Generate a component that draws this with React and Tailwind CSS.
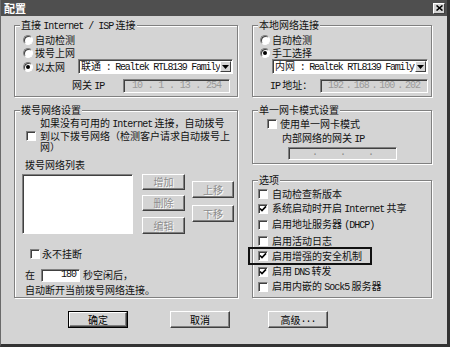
import React from "react";

const L = ({ children, className = "tracking-[-1px]" }) => (
  <span className={`font-['Liberation_Mono'] ${className}`}>{children}</span>
);

function Group({ title, className = "", children }) {
  return (
    <fieldset
      className={`border border-[#808080] shadow-[inset_1px_1px_0_#fff,1px_1px_0_#fff] ${className}`}
    >
      <legend className="ml-[5px] px-[1px] h-[12px] leading-[12px] bg-[#d4d4d4] whitespace-nowrap">
        {title}
      </legend>
      {children}
    </fieldset>
  );
}

function Radio({ checked }) {
  return (
    <span className="w-[10px] h-[10px] shrink-0 rounded-full bg-white border border-t-[#808080] border-l-[#808080] border-b-white border-r-white shadow-[inset_1px_1px_0_#404040] flex items-center justify-center">
      {checked && <span className="w-[4px] h-[4px] rounded-full bg-black" />}
    </span>
  );
}

function Check({ checked, className = "" }) {
  return (
    <span
      className={`w-[10px] h-[10px] shrink-0 bg-white border border-t-[#808080] border-l-[#808080] border-b-white border-r-white shadow-[inset_1px_1px_0_#404040] flex items-center justify-center ${className}`}
    >
      {checked && (
        <svg width="8" height="8" viewBox="0 0 8 8">
          <path d="M1 3.5 L3 5.6 L7 1.4" fill="none" stroke="#000" strokeWidth="1.6" />
        </svg>
      )}
    </span>
  );
}

function Combo({ children, className = "" }) {
  return (
    <div
      className={`flex items-center h-[15px] bg-white border border-t-[#808080] border-l-[#808080] border-b-white border-r-white shadow-[inset_1px_1px_0_#404040] ${className}`}
    >
      <span className="flex-1 min-w-0 pl-[2px] whitespace-nowrap">{children}</span>
      <span className="w-[11px] h-[11px] mr-[1px] shrink-0 bg-[#d4d4d4] border border-t-white border-l-white border-b-[#404040] border-r-[#404040] flex items-center justify-center">
        <svg width="7" height="4" viewBox="0 0 7 4">
          <path d="M0 0 H7 L3.5 4 Z" fill="#000" />
        </svg>
      </span>
    </div>
  );
}

function Field({ className = "", children }) {
  return (
    <div
      className={`flex items-center bg-[#d4d4d4] border border-t-[#808080] border-l-[#808080] border-b-white border-r-white shadow-[inset_1px_1px_0_#404040] text-[#9a9a9a] ${className}`}
    >
      {children}
    </div>
  );
}

function Btn({ children, disabled, className = "" }) {
  return (
    <div
      className={`flex items-center justify-center bg-[#d4d4d4] border border-t-white border-l-white border-b-[#404040] border-r-[#404040] shadow-[inset_-1px_-1px_0_#808080] ${
        disabled ? "text-[#8c8c8c] [text-shadow:1px_1px_0_#fff]" : "text-black"
      } ${className}`}
    >
      {children}
    </div>
  );
}

export default function App() {
  return (
    <div className="w-[450px] h-[347px] bg-[#d4d4d4] text-[10px] leading-[12px] text-[#111] font-['Noto_Sans_CJK_SC',sans-serif] border-l border-l-[#6a6a6a] border-r-[3px] border-r-[#333] border-b-[3px] border-b-[#333] flex flex-col overflow-hidden">
      {/* title bar */}
      <div className="h-[16px] shrink-0 bg-[#4f4f4f] flex items-center justify-between pl-[3px] pr-[2px]">
        <span className="text-white font-bold text-[11px] leading-[12px]">配置</span>
        <span className="w-[12px] h-[11px] bg-[#d4d4d4] border border-t-white border-l-white border-b-[#404040] border-r-[#404040] flex items-center justify-center">
          <svg width="7" height="6" viewBox="0 0 7 6">
            <path d="M0.5 0.5 L6.5 5.5 M6.5 0.5 L0.5 5.5" stroke="#000" strokeWidth="1.6" />
          </svg>
        </span>
      </div>

      <div className="flex pt-[3px] pl-[13px]">
        {/* left column */}
        <div className="flex flex-col w-[224px]">
          <Group title={<>直接 <L>Internet / ISP</L> 连接</>} className="h-[78px]">
            <div className="pl-[8px]">
              <div className="flex items-center h-[12px] mt-[3px] gap-[2px]">
                <Radio />
                <span>自动检测</span>
              </div>
              <div className="flex items-center h-[13px] gap-[2px]">
                <Radio />
                <span>拨号上网</span>
              </div>
              <div className="flex items-center h-[15px]">
                <Radio checked />
                <span className="ml-[2px] w-[43px]">以太网</span>
                <Combo className="w-[155px]">
                  联通<L className="tracking-[-1.25px]"> : Realtek RTL8139 Family</L>
                </Combo>
              </div>
              <div className="flex items-center h-[14px] mt-[5px]">
                <span className="ml-[49px] w-[51px]">
                  网关 <L>IP</L>
                </span>
                <Field className="w-[107px] h-[14px] justify-between px-[8px]">
                  <L>10</L>
                  <L>.</L>
                  <L>1</L>
                  <L>.</L>
                  <L>13</L>
                  <L>.</L>
                  <L>254</L>
                </Field>
              </div>
            </div>
          </Group>

          <Group title="拨号网络设置" className="h-[194px] mt-[7px]">
            <div className="flex items-start pl-[11px]">
              <Check className="mt-[15px]" />
              <div className="ml-[4px] leading-[11px] whitespace-nowrap pt-[1px]">
                <div>
                  如果没有可用的 <L>Internet</L> 连接，自动拨号
                </div>
                <div>到以下拨号网络（检测客户请求自动拨号上</div>
                <div>网）</div>
              </div>
            </div>
            <div className="pl-[10px] mt-[7px]">拨号网络列表</div>
            <div className="flex pl-[7px] mt-[3px]">
              <div className="w-[111px] h-[60px] bg-white border border-t-[#808080] border-l-[#808080] border-b-white border-r-white shadow-[inset_1px_1px_0_#404040]" />
              <div className="flex flex-col ml-[9px] w-[43px]">
                <Btn disabled className="h-[16px]">增加</Btn>
                <Btn disabled className="h-[16px] mt-[5px]">删除</Btn>
                <Btn disabled className="h-[17px] mt-[6px]">编辑</Btn>
              </div>
              <div className="flex flex-col ml-[7px] w-[42px]">
                <Btn disabled className="h-[17px] mt-[7px]">上移</Btn>
                <Btn disabled className="h-[17px] mt-[7px]">下移</Btn>
              </div>
            </div>
            <div className="flex items-center h-[12px] pl-[15px] mt-[14px]">
              <Check />
              <span className="ml-[2px]">永不挂断</span>
            </div>
            <div className="flex items-center h-[14px] pl-[10px] mt-[8px]">
              <span className="w-[16px]">在</span>
              <div className="w-[39px] h-[13px] bg-white border border-t-[#808080] border-l-[#808080] border-b-white border-r-white shadow-[inset_1px_1px_0_#404040] flex items-center justify-end pr-[3px]">
                <L>180</L>
              </div>
              <span className="ml-[3px]">秒空闲后，</span>
            </div>
            <div className="pl-[10px] mt-[2px]">自动断开当前拨号网络连接。</div>
          </Group>
        </div>

        {/* right column */}
        <div className="flex flex-col w-[180px] ml-[14px]">
          <Group title="本地网络连接" className="h-[78px]">
            <div className="pl-[7px]">
              <div className="flex items-center h-[12px] mt-[3px] gap-[2px]">
                <Radio />
                <span>自动检测</span>
              </div>
              <div className="flex items-center h-[13px] gap-[2px]">
                <Radio checked />
                <span>手工选择</span>
              </div>
              <div className="flex items-center h-[15px]">
                <Combo className="ml-[12px] w-[156px]">
                  内网<L className="tracking-[-1.25px]"> : Realtek RTL8139 Family</L>
                </Combo>
              </div>
              <div className="flex items-center h-[14px] mt-[5px]">
                <span className="ml-[10px] w-[50px]">
                  <L>IP</L> 地址：
                </span>
                <Field className="w-[108px] h-[14px] justify-between px-[7px]">
                  <L>192</L>
                  <L>.</L>
                  <L>168</L>
                  <L>.</L>
                  <L>100</L>
                  <L>.</L>
                  <L>202</L>
                </Field>
              </div>
            </div>
          </Group>

          <Group title="单一网卡模式设置" className="h-[60px] mt-[7px]">
            <div className="flex items-center h-[12px] pl-[14px] mt-[2px]">
              <Check />
              <span className="ml-[3px]">使用单一网卡模式</span>
            </div>
            <div className="h-[12px] pl-[29px] mt-[2px]">
              内部网络的网关 <L>IP</L>
            </div>
            <Field className="ml-[35px] w-[109px] h-[13px] mt-[3px] justify-evenly items-end text-[#888]">
              <L>.</L>
              <L>.</L>
              <L>.</L>
            </Field>
          </Group>

          <Group title="选项" className="h-[124px] mt-[10px]">
            <div className="flex flex-col pl-[5px]">
              {[
                ["自动检查新版本", false],
                [<>系统启动时开启 <L>Internet</L> 共享</>, true],
                [<>启用地址服务器 <L>(DHCP)</L></>, false],
                ["启用活动日志", false],
                ["启用增强的安全机制", true, true],
                [<>启用 <L>DNS</L> 转发</>, true],
                [<>启用内嵌的 <L>Sock5</L> 服务器</>, false],
              ].map(([t, c, hl], i) => (
                <div key={i} className="relative flex items-center h-[15.6px] whitespace-nowrap">
                  <Check checked={c} />
                  <span className="ml-[4px]">{t}</span>
                  {hl && (
                    <div className="absolute left-[-10px] top-1/2 -translate-y-1/2 w-[124px] h-[18px] border-2 border-[#111]" />
                  )}
                </div>
              ))}
            </div>
          </Group>
        </div>
      </div>

      {/* buttons */}
      <div className="flex mt-[13px]">
        <div className="ml-[67px] w-[60px] h-[17px] border border-black">
          <Btn className="w-full h-full">确定</Btn>
        </div>
        <Btn className="ml-[42px] w-[60px] h-[17px]">取消</Btn>
        <Btn className="ml-[38px] w-[60px] h-[17px]">高级<L>...</L></Btn>
      </div>
    </div>
  );
}
